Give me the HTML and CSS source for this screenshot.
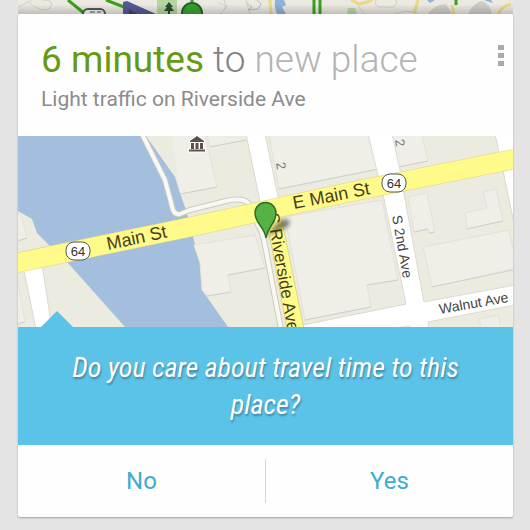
FILE: index.html
```
<!DOCTYPE html>
<html lang="en">
  <head>
    <meta charset="UTF-8" />
    <meta name="viewport" content="width=device-width, initial-scale=1.0" />
    <title>Travel time</title>
    <link rel="stylesheet" href="styles.css">
  </head>
  <body>
    <main class="feed">
      <!-- bottom of the previous card -->
      <div class="previous-card">
        <svg class="strip-map" viewBox="0 0 495 14" aria-hidden="true">
          <defs>
            <linearGradient id="shade" x2="0" y2="1">
              <stop offset="0.3" stop-color="#000" stop-opacity="0" />
              <stop offset="1" stop-color="#000" stop-opacity="0.18" />
            </linearGradient>
          </defs>
          <rect width="495" height="14" fill="#ebe9e1" />
          <path d="M410 14Q416 5 428 4L434 14z M450 14Q455 3 464 1Q472 4 474 14z" fill="#cfcdc8" />
          <path d="M330 8h7l2 6h-10z" fill="#b9d7a6" />
          <g fill="none" stroke="#d3d0c8">
            <path d="M0 7 L14 0 M10 2 Q24 14 32 8 Q38 0 24 0 M200 3 L210 6 L206 10 M228 0 L232 14 M336 0 L346 14 M358 0 Q356 7 362 7 H374 Q380 6 378 0 M376 14 L388 11 L400 13 M202 14 Q210 8 206 0" />
          </g>
          <path d="M229 3 L234 7 L230 10 L240 9 L243 4 L239 0" fill="none" stroke="#a9bddc" />
          <g fill="none" stroke="#ead984" stroke-width="3">
            <path d="M252 0 L253 14 M333 0 L341 4 L349 2 L354 0 M396 14 L400 0 M434 5 L436 14 M480 14 Q484 6 493 4" />
          </g>
          <path d="M257 0 h9 l2 5 -4 2 4 7 h-9 q-3 -7 -2 -14z M409 0 h8 l-5 3 z M466 0 h7 l2 3 z" fill="#8fb2da" />
          <g fill="none" stroke="#37a21a" stroke-width="3">
            <path d="M50 0 L67 14 M88 0 L106 7 M296 0 V14 M302 0 V14 M438 0 V5 M174 0 V4" />
          </g>
          <rect x="65" y="9" width="22" height="12" rx="5" fill="#f4f4f4" stroke="#555" stroke-width="2" />
          <path d="M72 12h5M79 12h4" stroke="#555" />
          <path d="M105 2 L109 1 L138 14 H105 z" fill="#555a96" />
          <path d="M111 9 L119 14 H111z" fill="#3c3f75" />
          <rect x="139" y="0" width="20" height="14" fill="#b6d5a0" />
          <path d="M151 2 l4 5 h-2 l3 4 h-4 v3 h-2 v-3 h-4 l3 -4 h-2 z" fill="#274d32" />
          <circle cx="174" cy="13" r="10" fill="#3ba232" stroke="#24632a" stroke-width="2" />
          <rect width="495" height="14" fill="url(#shade)" />
        </svg>
      </div>

      <article class="card">
        <header class="card-header">
          <div class="card-heading">
            <h1><span class="time">6 minutes</span> <span class="to">to</span> new place</h1>
            <p>Light traffic on Riverside Ave</p>
          </div>
          <button class="menu" type="button" aria-label="More options">
            <svg width="6" height="22" viewBox="0 0 6 22">
              <path d="M0 0h6v5H0z M0 8h6v5H0z M0 16h6v5H0z" fill="#aaa" />
            </svg>
          </button>
        </header>

        <svg class="map" viewBox="0 0 495 191" role="img" aria-label="Map of Main St and S Riverside Ave">
          <rect width="495" height="191" fill="#ecebe0" />
          <path d="M0 0H128L157 41L162 57L168 74L175 101L182 127L184 154L210 191H107L50 127L32 110L19 97L14 83L0 75z" fill="#a4bfdd" />

          <!-- buildings -->
          <g fill="#efeee7" stroke="#e3e1d9" stroke-width="1">
            <path d="M154 -1H187L199 51L162 58" />
            <path d="M189 -1L192 11L228 4" />
            <path d="M251 -1L261 53L342 37L360 33L350 -1z" />
            <path d="M176 109L237 99L247 132L210 139L213 156L189 160L184 154L182 127z" />
            <path d="M267 81L364 64L380 144L349 149L353 171L287 184z" />
            <path d="M374 -1L380 31L410 25L404 -1z" />
            <path d="M390 61L409 57L417 96L411 97L410 93L396 96z" />
            <path d="M465 56L478 53L485 85L449 93L447 77L469 72z" />
            <path d="M405 111L491 94L499 132L414 151z" />
            <path d="M-1 77L3 78L9 102L-1 105" />
            <path d="M-1 141L7 186L-1 188" />
            <path d="M463 191L461 183L480 179L483 191" />
          </g>
          <g fill="none" stroke="#cfcfd3" stroke-width="1">
            <path d="M162 58L199 51M192 11L228 4M261 53L360 33M189 160L213 156M210 139L247 132M287 184L353 171M349 149L380 144M380 31L410 25M396 96L410 93M411 97L417 96M449 93L485 85M414 151L495 134M0 105L9 102M0 188L7 186" />
          </g>

          <!-- side streets -->
          <g fill="#fff" stroke="#dcd9d0" stroke-width="1">
            <path d="M5 130L18 193H34L24 128z" />
            <path d="M228 -2L243 70H262L247 -2z" />
            <path d="M477 -2L482 20L485 35L497 92V-2z" />
          </g>
          <path d="M285 189L388 168L366 63L360 39L350 -2H374L382 34L386 58L406 166L497 149V169L410 186L411 193H280z" fill="#fff" stroke="#dcd9d0" />
          <path d="M374 192L392 189V192z" fill="#ecebe0" />
          <g fill="none" stroke-linejoin="round">
            <path d="M124 -2L147 44L155 74Q157 79 162 78L172 74L208 65Q226 61 231 68" stroke="#cdcabf" stroke-width="6" />
            <path d="M124 -2L147 44L155 74Q157 79 162 78L172 74L208 65Q226 61 231 68" stroke="#f9f8f4" stroke-width="4" />
            <path d="M236 82Q243 92 246 104L263 193" stroke="#cdcabf" stroke-width="6" />
            <path d="M236 82Q243 92 246 104L263 193" stroke="#f9f8f4" stroke-width="4" />
          </g>

          <!-- main roads -->
          <path d="M245 74L254 112L269 193H286L261 70z" fill="#fffb8b" stroke="#ddd489" />
          <path d="M-2 127L172 91L332 56L497 23" fill="none" stroke="#ddd489" stroke-width="20" />
          <path d="M-2 127L172 91L332 56L497 23" fill="none" stroke="#fffb8b" stroke-width="19" />
          <path d="M246 78L260 74L263 86L248 88z" fill="#fffb8b" />

          <!-- route shields -->
          <g class="shield">
            <rect x="48" y="106" width="24" height="18" rx="8" />
            <text x="60" y="120">64</text>
            <rect x="364" y="38" width="24" height="18" rx="8" />
            <text x="376" y="52">64</text>
          </g>

          <g class="street-name">
            <text class="large" transform="translate(90 114) rotate(-12)">Main St</text>
            <text class="large" transform="translate(276 73) rotate(-11)">E Main St</text>
            <text class="medium" transform="translate(249 78) rotate(80)">S Riverside Ave</text>
            <text class="small" transform="translate(374 80) rotate(80)">S 2nd Ave</text>
            <text class="small" transform="translate(422 178) rotate(-10)">Walnut Ave</text>
            <text class="number" transform="translate(258 27) rotate(80)">2</text>
            <text class="number" transform="translate(377 4) rotate(80)">2</text>
          </g>

          <!-- museum -->
          <path d="M172 5L179 0L186 5V6H172z M173 7h3v6h-3z M177.500 7h3v6h-3z M182 7h3v6h-3z M171 13.500h16v2h-16z" fill="#5c5148" stroke="#fff" stroke-width="2" paint-order="stroke" />

          <!-- pin -->
          <defs>
            <filter id="soft" x="-50%" y="-50%" width="200%" height="200%">
              <feGaussianBlur stdDeviation="2" />
            </filter>
          </defs>
          <path d="M248 101L258 88Q264 82 271 84Q274 90 262 94z" fill="#332" opacity="0.600" filter="url(#soft)" />
          <path d="M248 102C247 92 237 87 237 77A10.500 10.500 0 0 1 258 77C258 87 249 92 248 102z" fill="#56b244" stroke="#2d6f26" stroke-width="1.500" />
        </svg>

        <section class="prompt">
          <p>Do you care about travel time to this place?</p>
        </section>

        <div class="actions">
          <button type="button">No</button>
          <button type="button">Yes</button>
        </div>
      </article>
    </main>
  </body>
</html>
```
FILE: styles.css
```
* {
  box-sizing: border-box;
}

body {
  margin: 0;
  background: #e4e4e4;
  font-family: Roboto, "Liberation Sans", sans-serif;
}

.feed {
  padding: 0 17px 12px 18px;
}

.strip-map,
.map {
  display: block;
  width: 100%;
  height: auto;
}

.card {
  background: #fefefe;
  border-radius: 2px;
  box-shadow: 0 1px 2px rgba(0, 0, 0, 0.3);
}

.card-header {
  display: flex;
  justify-content: space-between;
  padding: 24px 9px 24px 23px;
}

h1 {
  margin: 0;
  color: #b4b4b4;
  font-size: 37px;
  font-weight: 300;
  line-height: 44px;
}

.time {
  color: #669a14;
  font-weight: 400;
}

.to {
  color: #808285;
}

.card-heading p {
  margin: 4px 0 0;
  color: #8c8c8c;
  font-size: 21px;
  line-height: 26px;
}

.menu {
  align-self: flex-start;
  margin-top: 7px;
  padding: 0;
  border: none;
  background: none;
  line-height: 0;
  cursor: pointer;
}

.street-name {
  fill: #4b3b18;
  font-family: "Liberation Sans", sans-serif;
}

.street-name .large {
  font-size: 18px;
}

.street-name .medium {
  font-size: 17px;
}

.street-name .small {
  fill: #444;
  font-size: 14px;
}

.street-name .number {
  fill: #777;
  font-size: 13px;
}

.shield rect {
  fill: #fff;
  stroke: #555;
  stroke-width: 1px;
}

.shield text {
  fill: #333;
  font-family: "Liberation Sans", sans-serif;
  font-size: 13px;
  text-anchor: middle;
}

.prompt {
  position: relative;
  padding: 22px 48px;
  background: #5bc2e8;
  color: #fff;
  font-family: "Roboto Condensed", Roboto, sans-serif;
  font-size: 28px;
  font-style: italic;
  line-height: 37px;
  text-align: center;
  text-shadow: 1px 2px 2px rgba(0, 0, 0, 0.3);
}

.prompt::before {
  content: "";
  position: absolute;
  top: -16px;
  left: 23px;
  border: 16px solid transparent;
  border-top: none;
  border-bottom-color: #5bc2e8;
}

.prompt p {
  margin: 0;
}

.actions {
  display: flex;
  padding: 14px 0;
}

.actions button {
  flex: 1;
  height: 44px;
  border: none;
  background: none;
  color: #3fabd3;
  font-family: inherit;
  font-size: 24px;
  cursor: pointer;
}

.actions button + button {
  border-left: 1px solid #d8d8d8;
}
```
